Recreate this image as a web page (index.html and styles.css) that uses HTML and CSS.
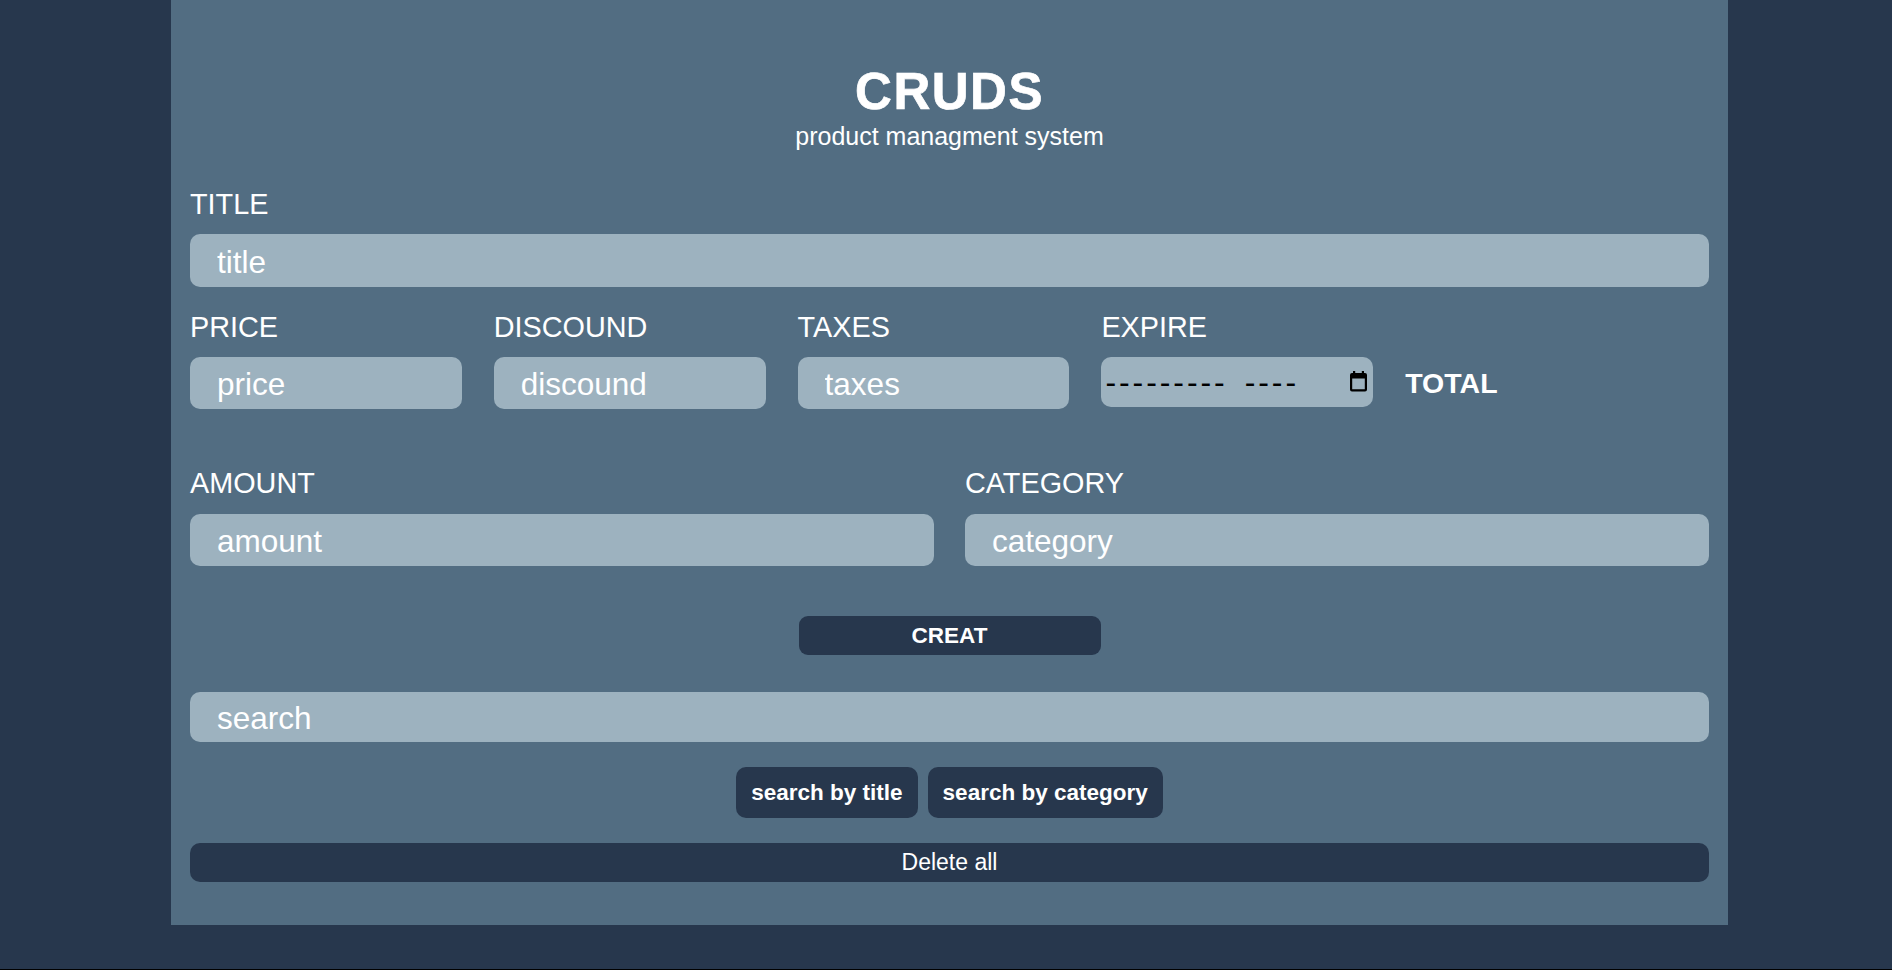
FILE: index.html
```html
<!DOCTYPE html>
<html lang="en">
<head>
<meta charset="utf-8">
<title>CRUDS</title>
<link rel="stylesheet" href="styles.css">
</head>
<body>
<div class="crud">
  <header class="head">
    <h1 class="brand">CRUDS</h1>
    <p class="tagline">product managment system</p>
  </header>

  <section class="inputs">
    <div class="field field-title">
      <label class="field-label">TITLE</label>
      <input class="box box-title" type="text" placeholder="title">
    </div>

    <div class="price-row">
      <div class="col">
        <label class="field-label">PRICE</label>
        <input class="box box-small" type="text" placeholder="price">
      </div>
      <div class="col">
        <label class="field-label">DISCOUND</label>
        <input class="box box-small" type="text" placeholder="discound">
      </div>
      <div class="col">
        <label class="field-label">TAXES</label>
        <input class="box box-small" type="text" placeholder="taxes">
      </div>
      <div class="col">
        <label class="field-label">EXPIRE</label>
        <div class="box box-date">
          <span class="date-mask"><span class="dash-group">---------</span><span class="dash-group second">----</span></span>
          <svg class="cal" width="19" height="21" viewBox="0 0 19 21" aria-hidden="true">
            <rect x="4" y="0" width="2.2" height="3.5" fill="#000"/>
            <rect x="12.8" y="0" width="2.2" height="3.5" fill="#000"/>
            <path fill="#000" fill-rule="evenodd" d="M3 2h13a2 2 0 0 1 2 2v14.5a2 2 0 0 1-2 2H3a2 2 0 0 1-2-2V4a2 2 0 0 1 2-2z M3.2 7.6v10.7h12.6V7.6z"/>
          </svg>
        </div>
      </div>
      <div class="col">
        <span class="field-label empty">&nbsp;</span>
        <div class="total">TOTAL</div>
      </div>
    </div>

    <div class="amount-row">
      <div class="col">
        <label class="field-label">AMOUNT</label>
        <input class="box box-wide" type="text" placeholder="amount">
      </div>
      <div class="col">
        <label class="field-label">CATEGORY</label>
        <input class="box box-wide" type="text" placeholder="category">
      </div>
    </div>

    <div class="create-row">
      <button class="btn btn-create">CREAT</button>
    </div>
  </section>

  <section class="search">
    <input class="box box-search" type="text" placeholder="search">
    <div class="search-btns">
      <button class="btn btn-search">search by title</button>
      <button class="btn btn-search">search by category</button>
    </div>
    <button class="btn btn-delete">Delete all</button>
  </section>
</div>
</body>
</html>
```

FILE: styles.css
```css
* { box-sizing: border-box; }

html { background: #000; }

body {
  margin: 0;
  min-height: calc(100vh - 1px);
  padding: 0 164px 0 171px;
  background: #27374d;
  font-family: "Liberation Sans", Arial, sans-serif;
  color: #fff;
}

.crud {
  background: #526d82;
  padding: 62px 19px 43px;
}

.head { text-align: center; }

.brand {
  margin: 0;
  font-size: 51px;
  line-height: 60px;
  font-weight: 700;
  letter-spacing: 1.5px;
  -webkit-text-stroke: 0.7px #fff;
}

.tagline {
  margin: 0;
  font-size: 25px;
  line-height: 29px;
}

.inputs { margin-top: 37px; }

.field, .col {
  display: flex;
  flex-direction: column;
}

.field-label {
  font-size: 28.8px;
  line-height: 33px;
  margin-bottom: 13px;
}

.box {
  display: block;
  border: none;
  outline: none;
  background: #9db2bf;
  border-radius: 10px;
  color: #fff;
  font-family: "Liberation Sans", Arial, sans-serif;
  font-size: 31.5px;
  padding: 3px 0 0 27px;
}

.box::placeholder { color: #fff; opacity: 1; }

.box-title { width: 100%; height: 53px; }

.price-row {
  display: grid;
  grid-template-columns: repeat(5, 1fr);
  margin-top: 24px;
}

.box-small { width: calc(100% - 32px); height: 52px; }

.box-date {
  width: calc(100% - 32px);
  height: 50px;
  padding: 0 5px 0 4px;
  display: flex;
  align-items: center;
  justify-content: space-between;
}

.date-mask {
  display: flex;
  font-family: "Liberation Sans", Arial, sans-serif;
  font-size: 32px;
  line-height: 36px;
  letter-spacing: 2.93px;
  color: #000;
}

.dash-group.second { margin-left: 17px; }

.cal { display: block; margin-top: -1px; }

.total {
  height: 52px;
  display: flex;
  align-items: center;
  font-size: 28.5px;
  font-weight: 700;
}

.amount-row {
  display: grid;
  grid-template-columns: 1fr 1fr;
  column-gap: 31px;
  margin-top: 58px;
}

.amount-row .field-label { margin-bottom: 14px; }

.box-wide { width: 100%; height: 52px; }

.create-row {
  display: flex;
  justify-content: center;
  margin-top: 50px;
}

.btn {
  border: none;
  background: #27374d;
  color: #fff;
  font-family: "Liberation Sans", Arial, sans-serif;
  border-radius: 10px;
  cursor: pointer;
}

.btn-create {
  width: 302px;
  height: 39px;
  font-size: 22.5px;
  font-weight: 700;
  border-radius: 9px;
}

.search { margin-top: 37px; }

.box-search { width: 100%; height: 50px; }

.search-btns {
  display: flex;
  justify-content: center;
  gap: 10px;
  margin-top: 25px;
}

.btn-search {
  height: 51px;
  padding: 0 15px;
  font-size: 22.5px;
  font-weight: 700;
}

.btn-delete {
  display: block;
  width: 100%;
  height: 39px;
  margin-top: 25px;
  font-size: 23px;
}
```
